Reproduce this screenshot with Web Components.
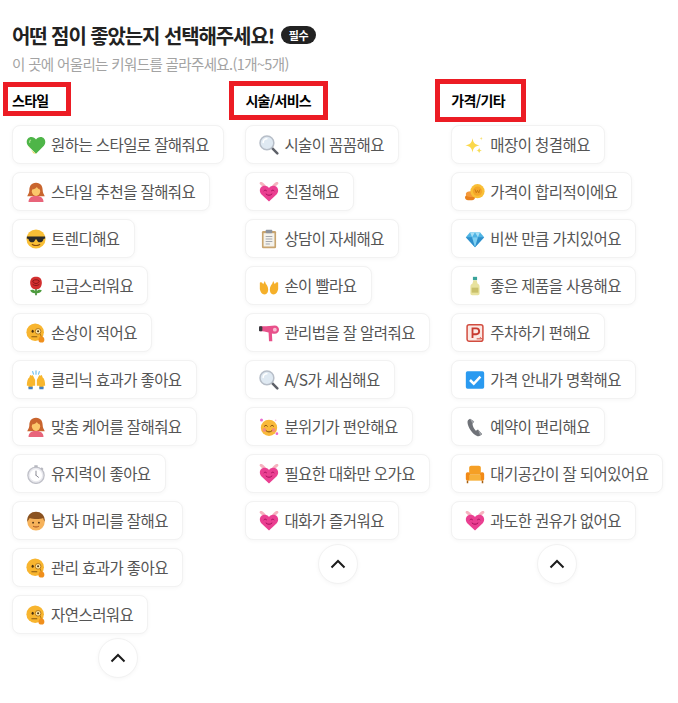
<!DOCTYPE html>
<html lang="ko">
<head>
<meta charset="utf-8">
<title>키워드 선택</title>
<style>
  html, body { margin: 0; background: #fff; }
  body { font-family: "Noto Sans CJK KR", "Noto Sans", sans-serif; }
</style>
</head>
<body>
<review-keywords>
  <keyword-column label="스타일" mark="-9 -7 -22.300 -5">
    <keyword-chip icon="greenheart">원하는 스타일로 잘해줘요</keyword-chip>
    <keyword-chip icon="woman">스타일 추천을 잘해줘요</keyword-chip>
    <keyword-chip icon="cool">트렌디해요</keyword-chip>
    <keyword-chip icon="rose">고급스러워요</keyword-chip>
    <keyword-chip icon="monocle">손상이 적어요</keyword-chip>
    <keyword-chip icon="hands">클리닉 효과가 좋아요</keyword-chip>
    <keyword-chip icon="woman">맞춤 케어를 잘해줘요</keyword-chip>
    <keyword-chip icon="watch">유지력이 좋아요</keyword-chip>
    <keyword-chip icon="boy">남자 머리를 잘해요</keyword-chip>
    <keyword-chip icon="monocle">관리 효과가 좋아요</keyword-chip>
    <keyword-chip icon="monocle">자연스러워요</keyword-chip>
  </keyword-column>
  <keyword-column label="시술/서비스" mark="-16 -8 -17 -9">
    <keyword-chip icon="magnifier">시술이 꼼꼼해요</keyword-chip>
    <keyword-chip icon="heart">친절해요</keyword-chip>
    <keyword-chip icon="clipboard">상담이 자세해요</keyword-chip>
    <keyword-chip icon="open">손이 빨라요</keyword-chip>
    <keyword-chip icon="dryer">관리법을 잘 알려줘요</keyword-chip>
    <keyword-chip icon="magnifier">A/S가 세심해요</keyword-chip>
    <keyword-chip icon="blush">분위기가 편안해요</keyword-chip>
    <keyword-chip icon="heart">필요한 대화만 오가요</keyword-chip>
    <keyword-chip icon="heart">대화가 즐거워요</keyword-chip>
  </keyword-column>
  <keyword-column label="가격/기타" mark="-16 -10 -20.700 -11">
    <keyword-chip icon="sparkles">매장이 청결해요</keyword-chip>
    <keyword-chip icon="coin">가격이 합리적이에요</keyword-chip>
    <keyword-chip icon="gem">비싼 만큼 가치있어요</keyword-chip>
    <keyword-chip icon="bottle">좋은 제품을 사용해요</keyword-chip>
    <keyword-chip icon="parking">주차하기 편해요</keyword-chip>
    <keyword-chip icon="check">가격 안내가 명확해요</keyword-chip>
    <keyword-chip icon="phone">예약이 편리해요</keyword-chip>
    <keyword-chip icon="sofa">대기공간이 잘 되어있어요</keyword-chip>
    <keyword-chip icon="heart">과도한 권유가 없어요</keyword-chip>
  </keyword-column>
</review-keywords>

<script>
const ICONS = {
  greenheart: `<path d="M12 22.500 2.500 13C-1 8.500 1.500 2.500 6.500 2.500c2.300 0 4.300 1.200 5.500 3 1.200-1.800 3.200-3 5.500-3 5 0 7.500 6 4 10.500z" fill="#4eb548"/><path d="M2.500 13c1.500 3.500 4.500 6.500 9.500 9.500l-3-.5z" fill="#f2cf3b"/><path d="M6 6c-1.500.5-2 2-1.500 3.500" stroke="#a5e08f" stroke-width="1.500" fill="none"/>`,
  woman: `<path d="M12 1C6 1 4 5.500 4 10c0 3-1.500 5-2.500 7h21c-1-2-2.500-4-2.500-7 0-4.500-2-9-8-9z" fill="#c9652e"/><path d="M3 24c0-5 4-7.500 9-7.500s9 2.500 9 7.500z" fill="#e8647a"/><ellipse cx="12" cy="11" rx="5" ry="5.800" fill="#fbc76b"/><path d="M7 9c2.500 0 5-1 6-3 1 2 2.500 3 4 3-.5-3-2.500-5-5-5S7.500 6 7 9z" fill="#c9652e"/>`,
  cool: `<circle cx="12" cy="12" r="11.500" fill="#f9bf36"/><path d="M1 9h22v2.500l-2 .5c-.5 3-2 4-4.500 4-2 0-3-1.500-3.500-3.500h-2C10.500 14.500 9.500 16 7.500 16c-2.500 0-4-1-4.500-4l-2-.5z" fill="#2b2b2b"/><path d="M7.500 18.500c2.500 1.500 6.500 1.500 9 0" stroke="#8a4f10" stroke-width="1.300" fill="none" stroke-linecap="round"/>`,
  rose: `<path d="M12 14v9" stroke="#3f8a35" stroke-width="2"/><path d="M12 19c-2-3-5-3-7-2 1 3 4 4 7 3.500zM12 19c2-3 5-3 7-2-1 3-4 4-7 3.500z" fill="#4d9c3d"/><path d="M12 1C8 1 5 3 5 8c0 5 3 8 7 8s7-3 7-8c0-5-3-7-7-7z" fill="#d32f2f"/><path d="M8 6c2-2 6-2 8 0-1 4-7 4-8 0zM8 10c2 2 6 2 8 0" stroke="#8f1a1a" stroke-width="1.200" fill="none"/>`,
  monocle: `<circle cx="11" cy="11" r="10.500" fill="#f8b52f"/><ellipse cx="8" cy="10" rx="1.300" ry="1.800" fill="#4a3010"/><circle cx="14.500" cy="10" r="3.400" fill="#fde6a4" stroke="#a66a10" stroke-width="1"/><circle cx="14.500" cy="10" r="1.200" fill="#4a3010"/><path d="M17 13l2 5" stroke="#a66a10" stroke-width="1"/><path d="M7 16.500h6" stroke="#8a5a10" stroke-width="1.200" stroke-linecap="round"/><path d="M15 21c0-3 1.500-5 3.500-5s3.500 2 3.500 4-1 3.500-3 3.500-4-.5-4-2.500z" fill="#f08f1c"/>`,
  hands: `<path d="M1 19c0-5 1-9 3-10l1-3 2 1 1-1 3 6v7H8v3H3v-3z" fill="#f8b62d"/><path d="M23 19c0-5-1-9-3-10l-1-3-2 1-1-1-3 6v7h3v3h5v-3z" fill="#f8b62d"/><path d="M3 20h5v3H3zM16 20h5v3h-5z" fill="#3f7fc4"/><path d="M12 1v4M8 2l1 3M16 2l-1 3" stroke="#7cc4ee" stroke-width="1.500" stroke-linecap="round"/>`,
  watch: `<circle cx="12" cy="13.500" r="9.800" fill="#e9e9ee" stroke="#bfc0c8" stroke-width="1.500"/><circle cx="12" cy="13.500" r="7.300" fill="#fff"/><path d="M12 13.500V8.500M12 13.500l3 2.500" stroke="#8d8d96" stroke-width="1.200" stroke-linecap="round"/><path d="M10 1.500h4v2.500h-4zM19 4l2 2-1.500 1.500-2-2z" fill="#b5b6be"/>`,
  boy: `<circle cx="12" cy="13" r="10.500" fill="#f6b25a"/><path d="M1.500 13C1 5 6 1 12 1s11 4 10.500 12c-1-1.500-1.500-3-2-4.500-3 1.500-12 1.500-16 0-1 1.500-2 3-3 4.500z" fill="#8a5220"/><circle cx="8.500" cy="14" r="1.100" fill="#4a2d10"/><circle cx="15.500" cy="14" r="1.100" fill="#4a2d10"/><path d="M9 18.500c2 1 4 1 6 0" stroke="#a8501e" stroke-width="1.200" fill="none" stroke-linecap="round"/>`,
  magnifier: `<path d="M14 14l8 8" stroke="#5d6068" stroke-width="3" stroke-linecap="round"/><circle cx="9.500" cy="9.500" r="8.300" fill="#dfe9f2" stroke="#b7bec8" stroke-width="1.800"/><path d="M5 9c0-2.500 2-4.500 4.500-4.500" stroke="#fff" stroke-width="1.800" fill="none" stroke-linecap="round"/>`,
  heart: `<path d="M2.500 1.500c1.500 1 3 2.500 4.500 4M21.500 1.500c-1.500 1-3 2.500-4.500 4" stroke="#f6b3c0" stroke-width="3.500" stroke-linecap="round"/><path d="M12 23.500 3 15C-1 10.500 1.500 4.500 6.500 4.500c2.300 0 4.300 1 5.500 2.700 1.200-1.700 3.200-2.700 5.500-2.700 5 0 7.500 6 3.500 10.500z" fill="#ea3f91"/><path d="M6 10.500c1-1 2-1 3 0M15 10.500c1-1 2-1 3 0M8.500 14.500c2 2 5 2 7 0" stroke="#a80f5c" stroke-width="1.200" fill="none" stroke-linecap="round"/>`,
  clipboard: `<rect x="3.500" y="2.500" width="17" height="20.500" rx="1.500" fill="#c9a570"/><rect x="5.500" y="5" width="13" height="16" fill="#f4f2ec"/><rect x="8" y="1" width="8" height="4" rx="1" fill="#8d939c"/><path d="M8 9h8M8 12h8M8 15h8M8 18h5" stroke="#a3a7ae" stroke-width="1.200"/>`,
  open: `<path d="M1 8c2-1 3 0 4 2l2-4 1 3c1 1 3 4 3 7 0 3-1 5-3 6-4 1-6-2-7-6z" fill="#f5b02a"/><path d="M23 8c-2-1-3 0-4 2l-2-4-1 3c-1 1-3 4-3 7 0 3 1 5 3 6 4 1 6-2 7-6z" fill="#f5b02a"/>`,
  dryer: `<path d="M1 4h4c5 0 10-1 14-1a5 5 0 0 1 0 10c-1.500 0-2.500-.2-3.500-.4l.500 9.400h-4l-.5-10.500C8 10.500 5 10 1 10z" fill="#e8508a"/><rect x="0" y="4" width="4" height="6" rx="1" fill="#3a3a3f"/><circle cx="19" cy="8" r="2.300" fill="#f8bdd2"/>`,
  blush: `<circle cx="12" cy="13" r="9.800" fill="#f9b93a"/><circle cx="6.500" cy="15.500" r="2.200" fill="#f68d7a"/><circle cx="17.500" cy="15.500" r="2.200" fill="#f68d7a"/><path d="M6.500 11c1-1.300 2.500-1.300 3.500 0M14 11c1-1.300 2.500-1.300 3.500 0M8.500 16.500c2 2 5 2 7 0" stroke="#7e4a0e" stroke-width="1.200" fill="none" stroke-linecap="round"/><circle cx="3" cy="3.500" r="1.800" fill="#e86bd0"/><circle cx="21.500" cy="20" r="1.600" fill="#e86bd0"/><circle cx="20" cy="4" r="1" fill="#f5b8e6"/>`,
  sparkles: `<path d="M9 4c.900 5.500 2.800 7.500 8.500 8.500-5.700 1-7.600 2.800-8.500 8.500-.900-5.700-2.800-7.500-8.500-8.500C6.200 11.500 8.100 9.500 9 4z" fill="#fbd84a"/><path d="M17 15c.4 2.500 1.200 3.300 3.500 3.500-2.300.4-3.100 1.200-3.500 3.500-.4-2.300-1.200-3.100-3.500-3.500 2.300-.2 3.100-1 3.500-3.500z" fill="#f6dc57"/><path d="M19.500 2c.2 1.500.8 2 2 2.200-1.200.2-1.800.8-2 2.300-.2-1.500-.8-2.100-2-2.300 1.200-.2 1.800-.7 2-2.200z" fill="#f7e27a"/>`,
  coin: `<ellipse cx="6" cy="18.500" rx="6" ry="3.500" fill="#e8801c"/><ellipse cx="7" cy="14.500" rx="6" ry="3.500" fill="#f4993a"/><circle cx="15" cy="11" r="8.500" fill="#f9bf36"/><circle cx="15" cy="11" r="5.500" fill="#f4a628"/><path d="M12 9l1.500 4 1.500-3 1.500 3L18 9" stroke="#c97a10" stroke-width="1.100" fill="none"/>`,
  gem: `<path d="M6 4h12l5 6-11 12L1 10z" fill="#4fb4e4"/><path d="M6 4l2.500 6L12 4l3.500 6L18 4z" fill="#a7dff5"/><path d="M1 10h22l-11 12z" fill="#2f8fcb"/><path d="M8.500 10 12 22l3.500-12z" fill="#7fd0f2"/>`,
  bottle: `<rect x="9.500" y="1" width="5" height="4" fill="#3aa39a"/><path d="M10 5h4l1 4c2 1 2.500 2 2.500 4v8c0 1.500-1 2-2 2h-7c-1 0-2-.5-2-2v-8c0-2 .5-3 2.500-4z" fill="#e8e29d"/><rect x="8" y="14" width="8" height="6" fill="#c9c06a"/>`,
  parking: `<rect x="2.500" y="2" width="19" height="20" rx="2.500" fill="#fbe9e4" stroke="#d24c3f" stroke-width="1.800"/><path d="M9 18V6.500h4.500a3.500 3.500 0 0 1 0 7H9" fill="none" stroke="#c73b30" stroke-width="2.200"/><path d="M14 19h6l-2-2" fill="none" stroke="#d24c3f" stroke-width="1.200"/>`,
  check: `<rect x="1" y="1.500" width="22" height="21" rx="2" fill="#2a9af0"/><path d="M6 12l4.500 4.500L18.500 8" stroke="#fff" stroke-width="3" fill="none"/>`,
  phone: `<path d="M6 2c-2 1-3 2-3 4 0 6 6 15 12 17 2 .5 4-.5 5.500-2.500l-5-5.500-2.500 1.500C10.500 14 9 10 9 8l2-2.500z" fill="#6f7278"/><path d="M6 2l5 3.500L9 8zM15.500 15l5 5.500-2.500 1.500z" fill="#a0a3a8"/>`,
  sofa: `<path d="M5 4.500c0-1.500 1-2.500 2.500-2.500h9C18 2 19 3 19 4.500V13H5z" fill="#f59f25"/><rect x="1" y="10" width="5" height="10" rx="2" fill="#f28a17"/><rect x="18" y="10" width="5" height="10" rx="2" fill="#f28a17"/><rect x="5" y="13" width="14" height="7" fill="#f7b13b"/><path d="M3 20v3M21 20v3" stroke="#a66010" stroke-width="1.800"/>`
};

class ReviewKeywords extends HTMLElement {
  constructor() {
    super();
    this.attachShadow({ mode: 'open' });
    this.shadowRoot.innerHTML = `
      <style>
        :host {
          display: block;
          box-sizing: border-box;
          height: 703px;
          padding: 22px 0 0 12px;
          color: #222;
          overflow: hidden;
        }
        h2 {
          display: flex;
          align-items: center;
          gap: 7px;
          margin: 0;
          height: 26px;
          font-size: 20px;
          font-weight: 700;
          letter-spacing: -1.1px;
          white-space: nowrap;
        }
        .badge {
          display: inline-flex;
          align-items: center;
          justify-content: center;
          width: 35px;
          height: 18px;
          border-radius: 9px;
          background: #222;
          color: #fff;
          font-size: 11px;
          font-weight: 700;
          letter-spacing: -0.3px;
        }
        p {
          margin: 6px 0 0;
          height: 20px;
          line-height: 20px;
          color: #a3a3a3;
          font-size: 14.5px;
          letter-spacing: -0.63px;
          white-space: nowrap;
        }
        .cols {
          display: flex;
          align-items: flex-start;
          gap: 21.4px;
          margin-top: 15px;
        }
      </style>
      <h2>어떤 점이 좋았는지 선택해주세요! <span class="badge">필수</span></h2>
      <p>이 곳에 어울리는 키워드를 골라주세요.(1개~5개)</p>
      <div class="cols"><slot></slot></div>
    `;
  }
}

class KeywordColumn extends HTMLElement {
  constructor() {
    super();
    this.attachShadow({ mode: 'open' });
    this.shadowRoot.innerHTML = `
      <style>
        :host {
          display: flex;
          flex-direction: column;
          align-items: flex-start;
          width: max-content;
        }
        .label {
          position: relative;
          height: 22px;
          line-height: 22px;
          margin-bottom: 14.3px;
          font-size: 14px;
          font-weight: 700;
          color: #000;
          letter-spacing: -0.7px;
          white-space: nowrap;
        }
        .mark {
          position: absolute;
          box-sizing: border-box;
          border: 5px solid #ec1c24;
        }
        .chips {
          display: flex;
          flex-direction: column;
          align-items: flex-start;
          gap: 8px;
        }
        up-button { align-self: center; margin-top: 4px; }
      </style>
      <div class="label"><span class="text"></span><div class="mark"></div></div>
      <div class="chips"><slot></slot></div>
      <up-button></up-button>
    `;
  }

  connectedCallback() {
    this.shadowRoot.querySelector('.text').textContent = this.getAttribute('label');
    const [left, top, right, bottom] = this.getAttribute('mark').split(' ');
    const mark = this.shadowRoot.querySelector('.mark');
    mark.style.left = left + 'px';
    mark.style.top = top + 'px';
    mark.style.right = right + 'px';
    mark.style.bottom = bottom + 'px';
  }
}

class KeywordChip extends HTMLElement {
  constructor() {
    super();
    this.attachShadow({ mode: 'open' });
    this.shadowRoot.innerHTML = `
      <style>
        :host {
          display: flex;
          align-items: center;
          box-sizing: border-box;
          height: 39px;
          gap: 6px;
          padding: 0 14px;
          background: #fff;
          border: 1px solid #f2f2f2;
          border-radius: 8px;
          box-shadow: 0 1px 4px rgba(0, 0, 0, 0.04);
          color: #555;
          font-size: 15.5px;
          letter-spacing: -0.55px;
          word-spacing: -0.2px;
          white-space: nowrap;
        }
        svg { width: 20px; height: 20px; flex: none; margin: 0 -1px; }
        .text { margin-bottom: 2px; }
      </style>
      <svg viewBox="0 0 24 24"></svg>
      <span class="text"><slot></slot></span>
    `;
  }

  connectedCallback() {
    this.shadowRoot.querySelector('svg').innerHTML = ICONS[this.getAttribute('icon')] || '';
  }
}

class UpButton extends HTMLElement {
  constructor() {
    super();
    this.attachShadow({ mode: 'open' });
    this.shadowRoot.innerHTML = `
      <style>
        :host {
          display: flex;
          align-items: center;
          justify-content: center;
          box-sizing: border-box;
          width: 40px;
          height: 40px;
          background: #fff;
          border: 1px solid #f2f2f2;
          border-radius: 50%;
          box-shadow: 0 1px 4px rgba(0, 0, 0, 0.04);
        }
        svg { width: 16px; height: 10px; }
      </style>
      <svg viewBox="0 0 16 10"><path d="M1.500 8.500 8 2l6.500 6.500" fill="none" stroke="#1c1c1c" stroke-width="2"/></svg>
    `;
  }
}

customElements.define('review-keywords', ReviewKeywords);
customElements.define('keyword-column', KeywordColumn);
customElements.define('keyword-chip', KeywordChip);
customElements.define('up-button', UpButton);
</script>
</body>
</html>
